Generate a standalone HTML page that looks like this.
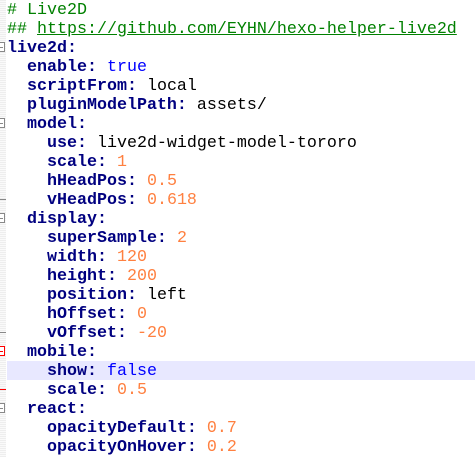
<!DOCTYPE html><html><head><style>
body{margin:0;width:475px;height:457px;overflow:hidden;background:#fff;position:relative}
.g{position:absolute;left:0;top:0;width:6px;height:457px;background:repeating-linear-gradient(0deg,#eee 0 1px,#fafafa 1px 2px)}
.c{position:absolute;left:7px;top:1px;font-family:"Liberation Mono","Courier New","Cousine","DejaVu Sans Mono",monospace;font-size:16.67px;line-height:19px;white-space:pre;color:#000;letter-spacing:0}
.k{color:#000080;font-weight:bold}.b{color:#0000ff}.n{color:#ff8040}.cm{color:#008000}
.hl{position:absolute;left:7px;top:361px;width:468px;height:19px;background:#e8e8ff}
.f{position:absolute;left:-5px;width:8px;height:8px;border:1px solid #888;background:#fff}
.f:after{content:"";position:absolute;left:2px;top:4px;width:5px;height:1px;background:#888}
.r{border-color:#f00}.r:after{background:#f00}
.t{position:absolute;left:0;width:6px;height:1px;background:#888}
</style></head><body>
<div class="g"></div><div class="hl"></div>
<div class="f" style="top:42px"></div><div class="f" style="top:118px"></div><div class="f" style="top:213px"></div><div class="f r" style="top:346px"></div><div class="f" style="top:403px"></div>
<div class="t" style="top:199px"></div><div class="t" style="top:332px"></div><div class="t" style="top:389px;background:#f00"></div>
<div class="c"><span class="cm"># Live2D</span>
<span class="cm">## <u>https://github.com/EYHN/hexo-helper-live2d</u></span>
<span class="k">live2d:</span>
  <span class="k">enable:</span> <span class="b">true</span>
  <span class="k">scriptFrom:</span> local
  <span class="k">pluginModelPath:</span> assets/
  <span class="k">model:</span>
    <span class="k">use:</span> live2d-widget-model-tororo
    <span class="k">scale:</span> <span class="n">1</span>
    <span class="k">hHeadPos:</span> <span class="n">0.5</span>
    <span class="k">vHeadPos:</span> <span class="n">0.618</span>
  <span class="k">display:</span>
    <span class="k">superSample:</span> <span class="n">2</span>
    <span class="k">width:</span> <span class="n">120</span>
    <span class="k">height:</span> <span class="n">200</span>
    <span class="k">position:</span> left
    <span class="k">hOffset:</span> <span class="n">0</span>
    <span class="k">vOffset:</span> <span class="n">-20</span>
  <span class="k">mobile:</span>
    <span class="k">show:</span> <span class="b">false</span>
    <span class="k">scale:</span> <span class="n">0.5</span>
  <span class="k">react:</span>
    <span class="k">opacityDefault:</span> <span class="n">0.7</span>
    <span class="k">opacityOnHover:</span> <span class="n">0.2</span></div>
</body></html>
